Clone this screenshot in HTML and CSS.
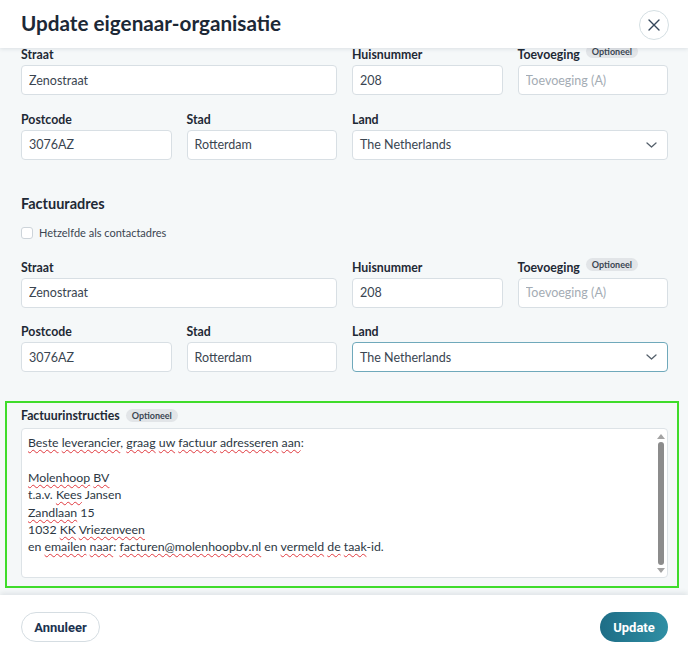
FILE: index.html
```html
<!DOCTYPE html>
<html lang="nl">
<head>
    <meta charset="UTF-8">
    <meta name="viewport" content="width=device-width, initial-scale=1.0">
    <title>Update eigenaar-organisatie</title>
    <link rel="stylesheet" href="styles.css">
</head>
<body>
    <div class="modal">
        <!-- Header -->
        <div class="modal-header">
            <h1>Update eigenaar-organisatie</h1>
            <button class="close-btn" aria-label="Sluiten">
                <svg width="12" height="12" viewBox="0 0 12 12"><path d="M1 1 L11 11 M11 1 L1 11" stroke="#34465a" stroke-width="1.4" stroke-linecap="round"/></svg>
            </button>
        </div>

        <!-- Body -->
        <div class="modal-body">
            <div class="form">
                <div class="grid">
                    <div class="field span-2">
                        <label>Straat</label>
                        <input class="input" type="text" value="Zenostraat">
                    </div>
                    <div class="field">
                        <label>Huisnummer</label>
                        <input class="input" type="text" value="208">
                    </div>
                    <div class="field">
                        <label>Toevoeging <span class="badge">Optioneel</span></label>
                        <input class="input" type="text" placeholder="Toevoeging (A)">
                    </div>
                    <div class="field">
                        <label>Postcode</label>
                        <input class="input" type="text" value="3076AZ">
                    </div>
                    <div class="field">
                        <label>Stad</label>
                        <input class="input" type="text" value="Rotterdam">
                    </div>
                    <div class="field span-2">
                        <label>Land</label>
                        <div class="input select">
                            <span>The Netherlands</span>
                            <svg width="11" height="6" viewBox="0 0 11 6"><path d="M1 1 L5.5 5 L10 1" fill="none" stroke="#55606b" stroke-width="1.3" stroke-linecap="round" stroke-linejoin="round"/></svg>
                        </div>
                    </div>
                </div>

                <h2>Factuuradres</h2>
                <label class="check">
                    <span class="box"></span>
                    Hetzelfde als contactadres
                </label>

                <div class="grid">
                    <div class="field span-2">
                        <label>Straat</label>
                        <input class="input" type="text" value="Zenostraat">
                    </div>
                    <div class="field">
                        <label>Huisnummer</label>
                        <input class="input" type="text" value="208">
                    </div>
                    <div class="field">
                        <label>Toevoeging <span class="badge">Optioneel</span></label>
                        <input class="input" type="text" placeholder="Toevoeging (A)">
                    </div>
                    <div class="field">
                        <label>Postcode</label>
                        <input class="input" type="text" value="3076AZ">
                    </div>
                    <div class="field">
                        <label>Stad</label>
                        <input class="input" type="text" value="Rotterdam">
                    </div>
                    <div class="field span-2">
                        <label>Land</label>
                        <div class="input select focused">
                            <span>The Netherlands</span>
                            <svg width="11" height="6" viewBox="0 0 11 6"><path d="M1 1 L5.5 5 L10 1" fill="none" stroke="#55606b" stroke-width="1.3" stroke-linecap="round" stroke-linejoin="round"/></svg>
                        </div>
                    </div>
                </div>

                <div class="highlight">
                    <label>Factuurinstructies <span class="badge">Optioneel</span></label>
                    <div class="textarea">
                        <div class="text">
                            <p><span class="sp">Beste</span> <span class="sp">leverancier</span>, <span class="sp">graag</span> <span class="sp">uw</span> <span class="sp">factuur</span> <span class="sp">adresseren</span> <span class="sp">aan</span>:</p>
                            <p>&nbsp;</p>
                            <p><span class="sp">Molenhoop</span> <span class="sp">BV</span></p>
                            <p>t.a.v. <span class="sp">Kees</span> Jansen</p>
                            <p><span class="sp">Zandlaan</span> 15</p>
                            <p>1032 <span class="sp">KK</span> <span class="sp">Vriezenveen</span></p>
                            <p>en <span class="sp">emailen</span> <span class="sp">naar</span>: <span class="sp">facturen@molenhoopbv.nl</span> en <span class="sp">vermeld</span> <span class="sp">de</span> <span class="sp">taak</span>-id.</p>
                        </div>
                        <div class="scrollbar">
                            <span class="arrow up"></span>
                            <span class="thumb"></span>
                            <span class="arrow down"></span>
                        </div>
                    </div>
                </div>
            </div>
        </div>

        <!-- Footer -->
        <div class="modal-footer">
            <button class="btn btn-secondary">Annuleer</button>
            <button class="btn btn-primary">Update</button>
        </div>
    </div>
</body>
</html>
```

FILE: styles.css
```css
/* Global */
body {
    margin: 0;
    font-family: 'Lato', 'Noto Sans', sans-serif;
    color: #1e2935;
    background: #f5f8f9;
    overflow: hidden;
}

h1, h2, p {
    margin: 0;
}

.modal {
    display: flex;
    flex-direction: column;
    height: 100vh;
}

/* Header */
.modal-header {
    position: relative;
    z-index: 2;
    flex: 0 0 46px;
    display: flex;
    align-items: center;
    justify-content: space-between;
    padding: 0 19px 2px 21px;
    background: #fff;
    box-shadow: 0 1px 4px rgba(30, 50, 70, 0.12);
}

.modal-header h1 {
    font-size: 20.7px;
    font-weight: 700;
    color: #1c2836;
}

.close-btn {
    width: 30px;
    height: 30px;
    border: 1px solid #d5dfe3;
    border-radius: 50%;
    background: #fff;
    display: flex;
    align-items: center;
    justify-content: center;
    padding: 0;
    margin-top: 4px;
}

/* Body */
.modal-body {
    flex: 1;
    overflow: hidden;
}

.form {
    margin-top: -3px;
    padding: 0 20px 0 21px;
}

.grid {
    display: grid;
    grid-template-columns: repeat(4, minmax(0, 1fr));
    column-gap: 15px;
    row-gap: 14.5px;
}

.span-2 {
    grid-column: span 2;
}

.field {
    display: flex;
    flex-direction: column;
    min-width: 0;
}

label {
    display: flex;
    align-items: flex-end;
    gap: 6px;
    height: 16px;
    margin-bottom: 4px;
    font-size: 12.3px;
    line-height: 13px;
    font-weight: 700;
    color: #1e2935;
}

.badge {
    align-self: flex-start;
    padding: 1px 6px;
    border-radius: 9px;
    background: #e2e5e8;
    font-size: 9px;
    font-weight: 700;
    color: #3b4652;
    line-height: 11px;
}

.input {
    box-sizing: border-box;
    width: 100%;
    height: 30px;
    padding: 0 7px;
    border: 1px solid #d8dfe4;
    border-radius: 4px;
    background: #fff;
    font-family: inherit;
    font-size: 12.5px;
    color: #3a4551;
    outline: none;
}

.input::placeholder {
    color: #a4acb4;
}

.select {
    display: flex;
    align-items: center;
    justify-content: space-between;
    padding-right: 10px;
}

.select.focused {
    border-color: #6fa9bb;
}

h2 {
    margin: 35px 0 13px;
    font-size: 14.5px;
    font-weight: 700;
    color: #1e2935;
}

.check {
    align-items: center;
    font-size: 11px;
    font-weight: 400;
    color: #3a4551;
    gap: 6px;
    margin-bottom: 17px;
}

.check .box {
    width: 10px;
    height: 10px;
    border: 1px solid #cdd4da;
    border-radius: 3px;
    background: #fff;
}

/* Highlighted invoice instructions */
.highlight {
    margin: 29px -11px 0 -16px;
    padding: 4px 9px 8px 14px;
    border: 2px solid #3fdc2b;
}

.highlight label {
    align-items: center;
    margin-bottom: 5px;
}

.highlight .badge {
    align-self: center;
}

.textarea {
    box-sizing: border-box;
    display: flex;
    height: 150px;
    padding: 5px 2px 4px 6px;
    border: 1px solid #dde3e7;
    border-radius: 4px;
    background: #fff;
    font-size: 12.3px;
    line-height: 17.4px;
    color: #2c3743;
}

.text {
    flex: 1;
}

.sp {
    text-decoration: underline wavy #e0393e;
    text-decoration-thickness: 1px;
    text-underline-offset: 2px;
}

.scrollbar {
    width: 8px;
    display: flex;
    flex-direction: column;
    align-items: center;
    gap: 3px;
}

.thumb {
    flex: 1;
    width: 6px;
    border-radius: 3px;
    background: #8c8c8c;
}

.arrow {
    width: 0;
    height: 0;
    border-left: 4px solid transparent;
    border-right: 4px solid transparent;
}

.arrow.up {
    border-bottom: 5px solid #a3a3a3;
}

.arrow.down {
    border-top: 5px solid #a3a3a3;
}

/* Footer */
.modal-footer {
    position: relative;
    z-index: 2;
    flex: 0 0 57px;
    box-sizing: border-box;
    display: flex;
    align-items: center;
    justify-content: space-between;
    padding: 7px 20px 0 21px;
    background: #fff;
    box-shadow: 0 -2px 5px rgba(30, 50, 70, 0.1);
}

.btn {
    height: 30px;
    border-radius: 15px;
    font-family: 'Roboto', sans-serif;
    font-size: 13px;
    font-weight: 700;
    cursor: pointer;
}

.btn-secondary {
    width: 79px;
    border: 1px solid #d5dde2;
    background: #fff;
    color: #1c3350;
}

.btn-primary {
    width: 68px;
    border: none;
    background: linear-gradient(to right, #1e6d86, #2f8fa4);
    color: #fff;
}
```
